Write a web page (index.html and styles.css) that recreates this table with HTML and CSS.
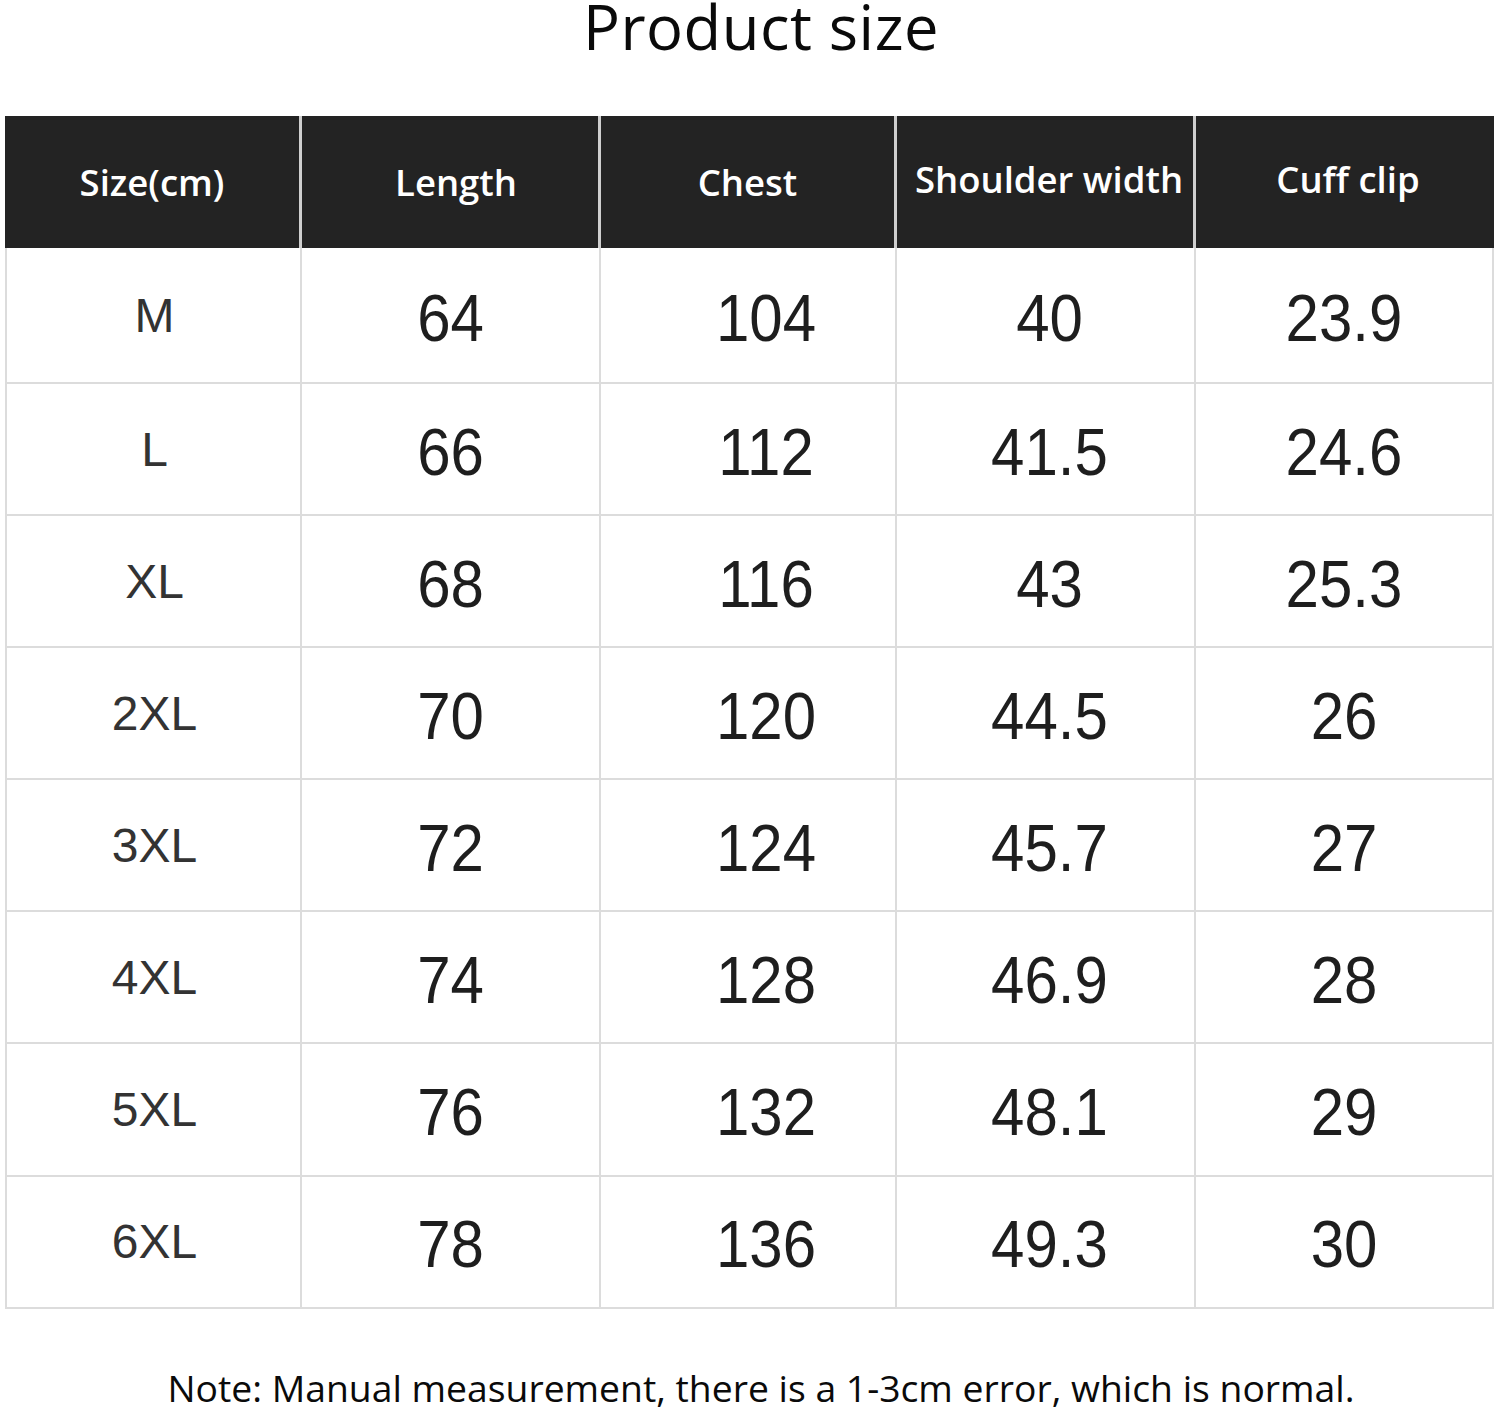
FILE: index.html
```html
<!DOCTYPE html>
<html lang="en">
<head>
<meta charset="utf-8">
<title>Product size</title>
<link rel="stylesheet" href="styles.css">
</head>
<body>
<main class="page">
  <h1 class="title">Product size</h1>
  <div class="table">
    <div class="th c1h">Size(cm)</div>
    <div class="th c2h">Length</div>
    <div class="th">Chest</div>
    <div class="th th-up c4h">Shoulder width</div>
    <div class="th th-up c5h">Cuff clip</div>

    <div class="td lbl">M</div><div class="td num"><span>64</span></div><div class="td num c3"><span>104</span></div><div class="td num c4"><span>40</span></div><div class="td num"><span>23.9</span></div>
    <div class="td lbl">L</div><div class="td num"><span>66</span></div><div class="td num c3"><span>112</span></div><div class="td num c4"><span>41.5</span></div><div class="td num"><span>24.6</span></div>
    <div class="td lbl">XL</div><div class="td num"><span>68</span></div><div class="td num c3"><span>116</span></div><div class="td num c4"><span>43</span></div><div class="td num"><span>25.3</span></div>
    <div class="td lbl">2XL</div><div class="td num"><span>70</span></div><div class="td num c3"><span>120</span></div><div class="td num c4"><span>44.5</span></div><div class="td num"><span>26</span></div>
    <div class="td lbl">3XL</div><div class="td num"><span>72</span></div><div class="td num c3"><span>124</span></div><div class="td num c4"><span>45.7</span></div><div class="td num"><span>27</span></div>
    <div class="td lbl">4XL</div><div class="td num"><span>74</span></div><div class="td num c3"><span>128</span></div><div class="td num c4"><span>46.9</span></div><div class="td num"><span>28</span></div>
    <div class="td lbl">5XL</div><div class="td num"><span>76</span></div><div class="td num c3"><span>132</span></div><div class="td num c4"><span>48.1</span></div><div class="td num"><span>29</span></div>
    <div class="td lbl">6XL</div><div class="td num"><span>78</span></div><div class="td num c3"><span>136</span></div><div class="td num c4"><span>49.3</span></div><div class="td num"><span>30</span></div>
  </div>
  <p class="note">Note: Manual measurement, there is a 1-3cm error, which is normal.</p>
</main>
</body>
</html>
```
FILE: styles.css
```css
html, body {
  margin: 0;
  padding: 0;
  background: #ffffff;
}

.page {
  width: 1500px;
  height: 1412px;
  overflow: hidden;
  display: flex;
  flex-direction: column;
  align-items: center;
}

.title {
  margin: -10px 0 0 0;
  padding-left: 22px;
  height: 126px;
  font-family: "Open Sans", "Noto Sans", sans-serif;
  font-weight: 400;
  font-size: 61.5px;
  line-height: 72px;
  color: #0a0a0a;
  letter-spacing: 0.5px;
}

.table {
  align-self: flex-start;
  margin-left: 5px;
  width: 1489px;
  display: grid;
  grid-template-columns: 297px 299px 296px 299px 298px;
  grid-template-rows: 132px 136px repeat(7, 132.1px);
}

.th {
  background: #232323;
  color: #ffffff;
  font-family: "Open Sans", "Noto Sans", sans-serif;
  font-weight: 600;
  font-size: 36.5px;
  display: flex;
  align-items: center;
  justify-content: center;
  border-right: 3px solid #cfcfcf;
  box-sizing: border-box;
  padding-bottom: 0;
}
.th:nth-child(5) { border-right: none; }
.th-up { padding-bottom: 6px; }
.c2h { padding-left: 12px; }
.c4h { padding-left: 8px; }
.c5h { padding-left: 6px; }

.td {
  display: flex;
  align-items: center;
  justify-content: center;
  border-right: 2px solid #dcdcdc;
  border-bottom: 2px solid #dcdcdc;
  box-sizing: border-box;
  font-family: "Liberation Sans", Arial, sans-serif;
}
.td:nth-child(5n+1) { border-left: 2px solid #dcdcdc; }

.lbl {
  font-size: 48px;
  color: #333333;
  padding-left: 2px;
}

.num {
  font-size: 60px;
  color: #1e1e1e;
  padding-top: 6px;
}
.num span {
  display: inline-block;
  transform: scaleY(1.12);
}
.c3 { padding-left: 36px; }
.c4 { padding-left: 8px; }

.note {
  margin: 58px 0 0 0;
  padding-left: 22px;
  font-family: "Open Sans", "Noto Sans", sans-serif;
  font-size: 37.3px;
  line-height: 42px;
  color: #0a0a0a;
}
```
